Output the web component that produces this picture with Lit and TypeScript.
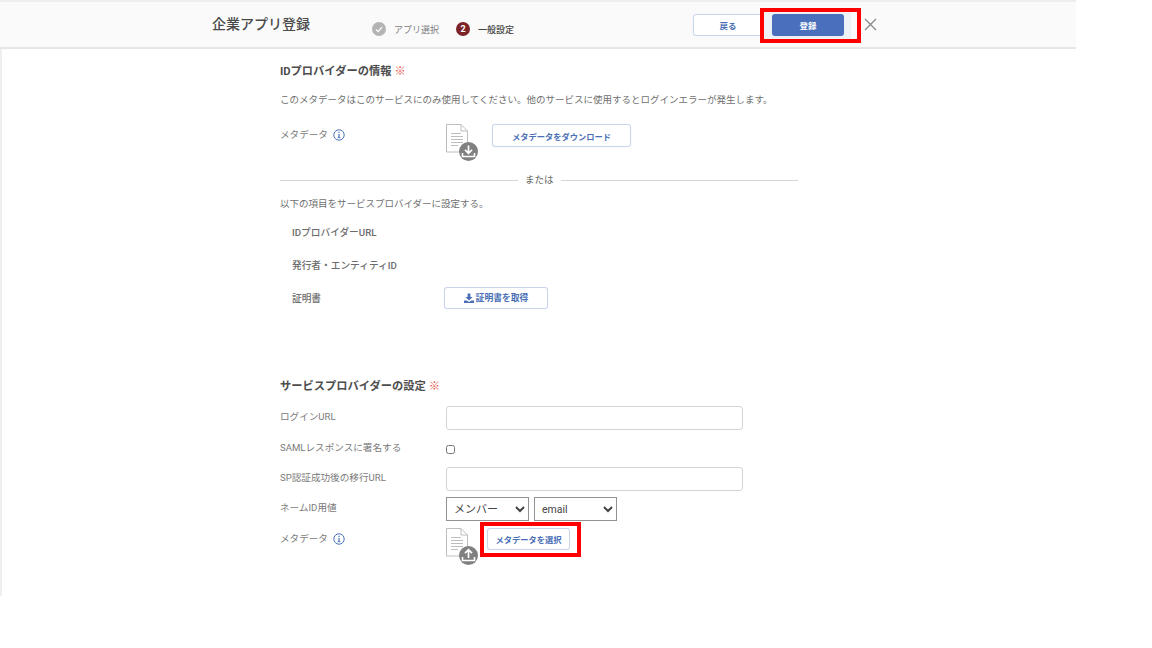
import { LitElement, html, css, svg } from "lit";
import { customElement } from "lit/decorators.js";

const info = html`<svg class="info" width="12" height="12" viewBox="0 0 12 12"><circle cx="6" cy="6" r="5.2" fill="none" stroke="#4a72b8" stroke-width="1"/><rect x="5.4" y="5" width="1.2" height="4" fill="#4a72b8"/><rect x="5.4" y="2.8" width="1.2" height="1.2" fill="#4a72b8"/><rect x="4.5" y="8.4" width="3" height=".8" fill="#4a72b8"/></svg>`;

const docIcon = (up: boolean) => html`<svg class="doc" width="34" height="38" viewBox="1 1 34 38">
  <path d="M1.5 1.5H16L22.5 8V29H1.5Z" fill="#fff" stroke="#bdbdbd" stroke-width="1"/>
  <path d="M16 1.5V8H22.5" fill="none" stroke="#bdbdbd"/>
  <path d="M6 10.5H16M6 13.5H18M6 16.5H18M6 19.5H18M6 22.5H13" stroke="#bdbdbd" stroke-width="1"/>
  <circle cx="23.5" cy="28.5" r="9.5" fill="#808080"/>
  ${up
    ? svg`<path d="M23.5 31V23M20 26.2L23.5 22.6L27 26.2" fill="none" stroke="#fff" stroke-width="1.7"/>`
    : svg`<path d="M23.5 22.5V30M20 26.8L23.5 30.4L27 26.8" fill="none" stroke="#fff" stroke-width="1.7"/>`}
  <path d="M17.5 30V33.5H29.5V30" fill="none" stroke="#fff" stroke-width="1.6"/>
</svg>`;

@customElement("app-root")
export class AppRoot extends LitElement {
  static styles = css`
    :host { display: block; width: 1152px; height: 648px; background: #fff; position: relative; overflow: hidden;
      font-family: Roboto, "Noto Sans CJK JP", sans-serif; color: #6f6f6f; }
    .frame { width: 1076px; height: 596px; box-sizing: border-box; border-left: 2px solid #efefef; }
    .header { height: 49px; box-sizing: border-box; margin-left: -2px; background: #fafafa; border-top: 2px solid #eeeeee; border-bottom: 2px solid #e6e6e6;
      display: flex; align-items: flex-start; }
    .title { margin: 13px 0 0 212px; width: 160px; font-size: 14px; line-height: 18px; font-weight: 500; color: #4a4a4a; flex: none; }
    .step { display: flex; align-items: center; margin-top: 19px; height: 16px; font-size: 9px; flex: none; }
    .step .dot { width: 14px; height: 14px; border-radius: 50%; margin-right: 8px; display: flex; align-items: center; justify-content: center; }
    .s1 { width: 84px; color: #808080; }
    .s1 .dot { background: #b4b4b4; }
    .s2 { width: 237px; color: #444; font-weight: 500; }
    .s2 .dot { background: #7b2328; color: #fff; font-size: 9px; font-weight: 700; }
    .btn { box-sizing: border-box; border: 1px solid #c9d5ea; border-radius: 3px; background: #fff; color: #4a6fb5; font-size: 8.25px; font-weight: 700;
      display: flex; align-items: center; justify-content: center; font-family: inherit; padding: 0; box-shadow: 0 0 1px #dfe6f2; }
    .back { width: 70px; height: 22px; margin-top: 12px; flex: none; font-size: 8.5px; }
    .regwrap { width: 88px; height: 34px; margin-top: 7px; background: #eef1f6; padding: 5px 7px 0 9px; box-sizing: border-box; flex: none; }
    .reg { width: 72px; height: 22px; background: #4a70bd; color: #fff; border: 0; font-size: 8.5px; }
    .close { margin: 16px 0 0 13px; flex: none; }
    .main { margin-left: 278px; width: 518px; padding-top: 15px; }
    h2 { margin: 0; font-size: 11.25px; line-height: 16px; font-weight: 700; color: #4d4d4d; }
    h2 i { font-style: normal; font-weight: 400; color: #e8544a; margin-left: 3px; }
    .note { font-size: 9.5px; line-height: 14px; margin-top: 13px; color: #6f6f6f; }
    .label { font-size: 9.6px; color: #7a7a7a; line-height: 14px; }
    .metarow { display: flex; margin-top: 17px; height: 48px; }
    .metarow .label { width: 166px; display: flex; align-items: center; height: 22px; flex: none; }
    .info { margin-left: 5px; }
    .doc { flex: none; }
    .dl { width: 139px; height: 23px; margin-left: 12px; flex: none; }
    .or { display: flex; align-items: center; gap: 7px; font-size: 9.5px; line-height: 14px; margin-top: 1px; margin-bottom: 1px; color: #666; }
    .or::before, .or::after { content: ""; flex: 1; height: 1px; background: #d6d6d6; }
    .or::before { flex: 0 0 238px; }
    .sub { margin-top: 10px; }
    .items { margin-top: 4px; }
    .kv { display: flex; align-items: center; padding-left: 12px; font-size: 9.7px; font-weight: 500; color: #6c6c6c; height: 33px; }
    .kv span { width: 152px; flex: none; }
    .cert { width: 104px; height: 22px; gap: 2px; font-size: 8.8px; }
    .sp { margin-top: 65px; }
    .row { display: flex; align-items: center; }
    .row .label { width: 166px; flex: none; padding-bottom: 2px; }
    .field { width: 297px; height: 24px; box-sizing: border-box; border: 1px solid #d4d4d4; border-radius: 3px; background: #fff; padding: 0; }
    .r1 { margin-top: 11px; height: 24px; }
    .r2 { margin-top: 7px; height: 24px; }
    .r3 { margin-top: 6px; height: 24px; }
    .r4 { margin-top: 6px; height: 24px; gap: 5px; }
    .r4 .label { margin-right: -5px; }
    input[type=checkbox] { width: 9px; height: 9px; margin: 0; accent-color: #666; }
    select { height: 24px; box-sizing: border-box; background: #fff; border: 1px solid #929292; border-radius: 0; color: #444; font-family: inherit; padding-left: 3px; flex: none; }
    .sel1 { width: 83px; font-size: 11px; }
    .sel2 { width: 83px; font-size: 10.5px; }
    .r5 { display: flex; margin-top: 7px; height: 40px; }
    .r5 .label { width: 166px; display: flex; align-items: center; height: 22px; flex: none; }
    .pick { width: 83px; height: 22px; margin: 0 0 0 7px; flex: none; }
    .mark { position: absolute; box-sizing: border-box; border: 4px solid #ff0000; pointer-events: none; }
    .m1 { left: 760px; top: 8px; width: 101px; height: 35px; }
    .m2 { left: 480px; top: 522px; width: 101px; height: 35px; }
  `;

  render() {
    return html`
      <div class="frame">
        <div class="header">
          <div class="title">企業アプリ登録</div>
          <div class="step s1"><span class="dot"><svg width="8" height="7" viewBox="0 0 8 7"><path d="M1 3.5L3.2 5.6L7 1.2" fill="none" stroke="#fff" stroke-width="1.3"/></svg></span>アプリ選択</div>
          <div class="step s2"><span class="dot">2</span>一般設定</div>
          <button class="btn back">戻る</button>
          <div class="regwrap"><button class="btn reg">登録</button></div>
          <svg class="close" width="13" height="13" viewBox="0 0 13 13"><path d="M1 1L12 12M12 1L1 12" stroke="#8a8a8a" stroke-width="1.3"/></svg>
        </div>
        <div class="main">
          <h2>IDプロバイダーの情報<i>※</i></h2>
          <div class="note">このメタデータはこのサービスにのみ使用してください。他のサービスに使用するとログインエラーが発生します。</div>
          <div class="metarow">
            <div class="label">メタデータ ${info}</div>
            ${docIcon(false)}
            <button class="btn dl">メタデータをダウンロード</button>
          </div>
          <div class="or">または</div>
          <div class="note sub">以下の項目をサービスプロバイダーに設定する。</div>
          <div class="items">
            <div class="kv"><span>IDプロバイダーURL</span></div>
            <div class="kv"><span>発行者・エンティティID</span></div>
            <div class="kv"><span>証明書</span>
              <button class="btn cert"><svg width="10" height="10" viewBox="0 0 10 10"><path d="M3.6 .5H6.4V4H8.6L5 7.6L1.4 4H3.6ZM0 7.4H2.6L5 9L7.4 7.4H10V10H0Z" fill="#4a6fb5"/></svg>証明書を取得</button>
            </div>
          </div>
          <div class="sp">
            <h2>サービスプロバイダーの設定<i>※</i></h2>
            <div class="row r1"><div class="label">ログインURL</div><div class="field"></div></div>
            <div class="row r2"><div class="label">SAMLレスポンスに署名する</div><input type="checkbox" /></div>
            <div class="row r3"><div class="label">SP認証成功後の移行URL</div><div class="field"></div></div>
            <div class="row r4"><div class="label">ネームID用値</div>
              <select class="sel1"><option>メンバー</option></select>
              <select class="sel2"><option>email</option></select>
            </div>
            <div class="r5">
              <div class="label">メタデータ ${info}</div>
              ${docIcon(true)}
              <button class="btn pick">メタデータを選択</button>
            </div>
          </div>
        </div>
      </div>
      <div class="mark m1"></div>
      <div class="mark m2"></div>
    `;
  }
}
